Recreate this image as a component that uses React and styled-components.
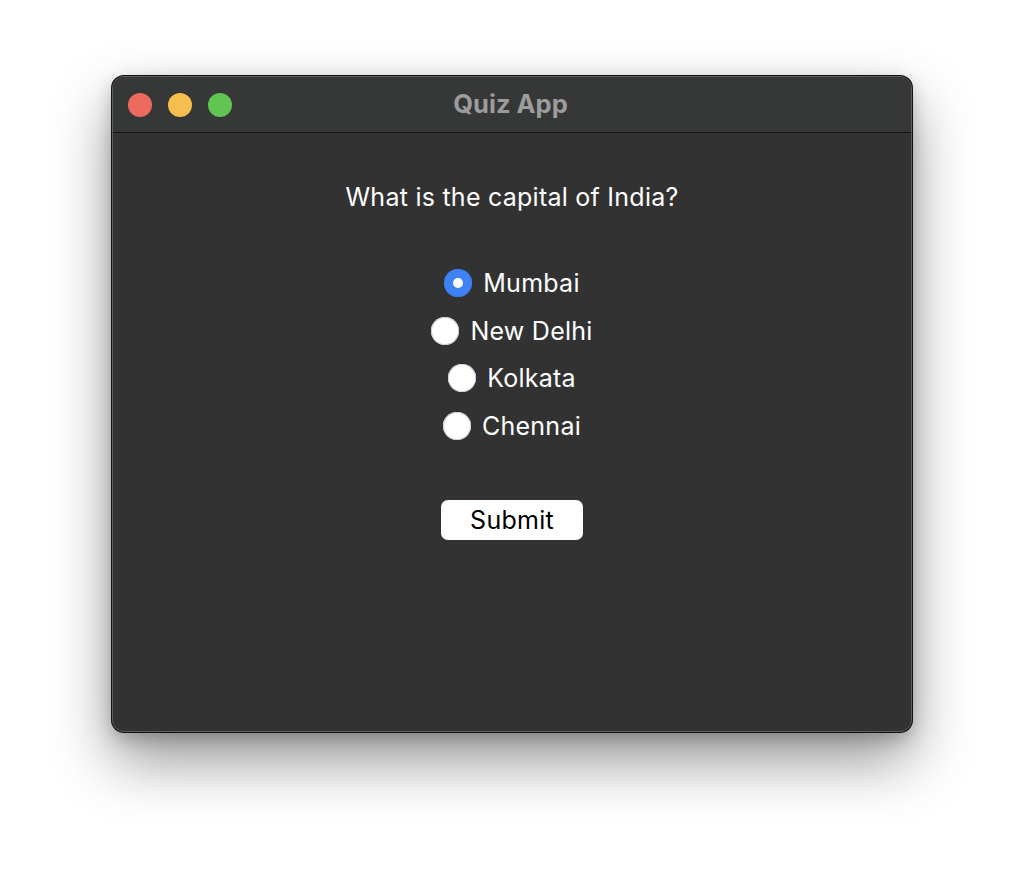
import React, { useState } from "react";
import styled, { createGlobalStyle } from "styled-components";

const Global = createGlobalStyle`
  html, body { margin: 0; padding: 0; background: #ffffff; }
  body { font-family: Inter, "Liberation Sans", Arial, sans-serif; }
`;

const Page = styled.div`
  width: 1024px;
  height: 880px;
  display: flex;
  justify-content: center;
  padding-top: 76px;
  box-sizing: border-box;
`;

const Window = styled.div`
  width: 800px;
  height: 656px;
  border-radius: 12px;
  background: #323232;
  border: 1px solid #5e5e5e;
  box-shadow: 0 0 0 1px #111, 0 28px 60px rgba(0, 0, 0, 0.42), 0 6px 18px rgba(0,0,0,0.22);
  display: flex;
  flex-direction: column;
  overflow: hidden;
  box-sizing: border-box;
`;

const TitleBar = styled.div`
  height: 56px;
  flex: none;
  background: #363737;
  border-bottom: 1px solid #141414;
  display: flex;
  align-items: center;
  position: relative;
  padding-left: 15px;
  box-sizing: border-box;
  gap: 16px;
`;

const Light = styled.span`
  width: 24px;
  height: 24px;
  border-radius: 50%;
  background: ${(p) => p.$c};
  display: block;
`;

const Title = styled.div`
  position: absolute;
  left: 0;
  right: 0;
  top: 0;
  bottom: 0;
  display: flex;
  align-items: center;
  justify-content: center;
  font-weight: 700;
  font-size: 25.5px;
  color: #9c9c9c;
  pointer-events: none;
  padding-bottom: 2px;
  padding-right: 3px;
`;

const Content = styled.div`
  flex: 1;
  display: flex;
  flex-direction: column;
  align-items: center;
  padding-top: 50px;
`;

const Question = styled.div`
  color: #ffffff;
  font-size: 25px;
  letter-spacing: 0.25px;
  line-height: 28px;
  margin-bottom: 48px;
`;

const Options = styled.div`
  display: flex;
  flex-direction: column;
  align-items: center;
  margin-bottom: 50px;
`;

const Row = styled.label`
  height: 47.7px;
  display: flex;
  align-items: center;
  gap: 11px;
  color: #ffffff;
  font-size: 25px;
  letter-spacing: 0.25px;
  cursor: pointer;
`;

const Radio = styled.span`
  width: 28px;
  height: 28px;
  border-radius: 50%;
  box-sizing: border-box;
  background: ${(p) => (p.$on ? "#3f83f5" : "#ffffff")};
  box-shadow: inset 0 0 0 1px ${(p) => (p.$on ? "#3a7be8" : "#cfcfcf")};
  display: flex;
  align-items: center;
  justify-content: center;
  &::after {
    content: "";
    width: 10px;
    height: 10px;
    border-radius: 50%;
    background: #ffffff;
    display: ${(p) => (p.$on ? "block" : "none")};
  }
`;

const Button = styled.button`
  width: 142px;
  height: 40px;
  border: none;
  border-radius: 7px;
  background: #ffffff;
  color: #000000;
  font-family: Inter, "Liberation Sans", Arial, sans-serif;
  font-size: 25px;
  letter-spacing: 0.25px;
  padding: 0;
  cursor: pointer;
`;

const options = ["Mumbai", "New Delhi", "Kolkata", "Chennai"];

export default function App() {
  const [sel, setSel] = useState("Mumbai");
  return (
    <>
      <Global />
      <Page>
        <Window>
          <TitleBar>
            <Light $c="#ed6a5e" />
            <Light $c="#f5bf4f" />
            <Light $c="#61c554" />
            <Title>Quiz App</Title>
          </TitleBar>
          <Content>
            <Question>What is the capital of India?</Question>
            <Options>
              {options.map((o) => (
                <Row key={o} onClick={() => setSel(o)}>
                  <Radio $on={sel === o} />
                  {o}
                </Row>
              ))}
            </Options>
            <Button>Submit</Button>
          </Content>
        </Window>
      </Page>
    </>
  );
}
